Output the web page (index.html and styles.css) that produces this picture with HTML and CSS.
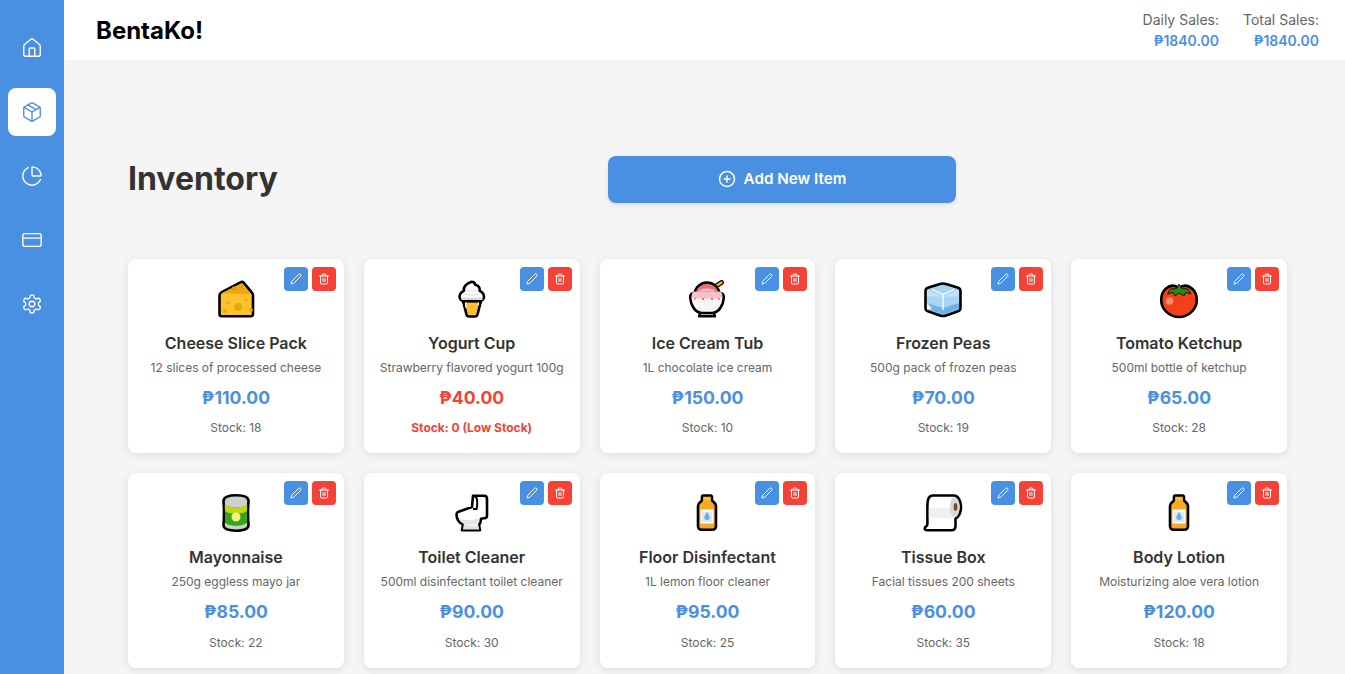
FILE: index.html
```html
<!DOCTYPE html>
<html lang="en">
<head>
<meta charset="utf-8">
<title>BentaKo! Inventory</title>
<link rel="stylesheet" href="styles.css">
</head>
<body>
<svg class="sprite" xmlns="http://www.w3.org/2000/svg">
  <symbol id="i-pen" viewBox="0 0 24 24"><path d="M21.174 6.812a1 1 0 0 0-3.986-3.987L3.842 16.174a2 2 0 0 0-.5.83l-1.321 4.352a.5.5 0 0 0 .623.622l4.353-1.32a2 2 0 0 0 .83-.497z"/></symbol>
  <symbol id="i-trash" viewBox="0 0 24 24"><path d="M3 6h18"/><path d="M19 6v14c0 1-1 2-2 2H7c-1 0-2-1-2-2V6"/><path d="M8 6V4c0-1 1-2 2-2h4c1 0 2 1 2 2v2"/><path d="M10 11v6"/><path d="M14 11v6"/></symbol>
  <symbol id="e-bottle" viewBox="0 0 40 40">
    <path d="M16.500 1.500h7a1.500 1.500 0 0 1 1.500 1.500v3c0 2 4 2 4 6v20c0 2.500-1.500 3.800-4 3.800H15c-2.500 0-4-1.300-4-3.800V12c0-4 4-4 4-6V3a1.500 1.500 0 0 1 1.500-1.500z" fill="#f9a825" stroke="#000" stroke-width="2.600" stroke-linejoin="round"/>
    <path d="M16.300 3h7.400v3.500h-7.400z" fill="#fbc02d"/>
    <path d="M13.500 15.500h13v14h-13z" fill="#fff"/>
    <path d="M15 17.500h10v10.500H15z" fill="#dbeafa"/>
    <path d="M20 18c-1.300 2.300-2.700 3.800-2.700 5.300a2.700 2.700 0 0 0 5.400 0c0-1.500-1.400-3-2.700-5.300z" fill="#6aaee6"/>
  </symbol>
</svg>
<div class="app">
  <nav class="sidebar">
    <a class="nav-item"><svg class="nav-icon" viewBox="0 0 24 24"><path d="M15 21v-8a1 1 0 0 0-1-1h-4a1 1 0 0 0-1 1v8"/><path d="M3 10a2 2 0 0 1 .709-1.528l7-5.999a2 2 0 0 1 2.582 0l7 5.999A2 2 0 0 1 21 10v9a2 2 0 0 1-2 2H5a2 2 0 0 1-2-2z"/></svg></a>
    <a class="nav-item active"><svg class="nav-icon" viewBox="0 0 24 24"><path d="m7.500 4.270 9 5.150"/><path d="M21 8a2 2 0 0 0-1-1.730l-7-4a2 2 0 0 0-2 0l-7 4A2 2 0 0 0 3 8v8a2 2 0 0 0 1 1.730l7 4a2 2 0 0 0 2 0l7-4A2 2 0 0 0 21 16Z"/><path d="m3.300 7 8.700 5 8.700-5"/><path d="M12 22V12"/></svg></a>
    <a class="nav-item"><svg class="nav-icon" viewBox="0 0 24 24"><path d="M21 12c.552 0 1.005-.449.95-.998a10 10 0 0 0-8.953-8.951c-.55-.055-.998.398-.998.95v8a1 1 0 0 0 1 1z"/><path d="M21.210 15.890A10 10 0 1 1 8 2.830"/></svg></a>
    <a class="nav-item"><svg class="nav-icon" viewBox="0 0 24 24"><rect x="2" y="5" width="20" height="14" rx="2"/><path d="M2 10h20"/></svg></a>
    <a class="nav-item"><svg class="nav-icon" viewBox="0 0 24 24"><path d="M12.220 2h-.44a2 2 0 0 0-2 2v.18a2 2 0 0 1-1 1.730l-.43.25a2 2 0 0 1-2 0l-.15-.08a2 2 0 0 0-2.730.73l-.22.38a2 2 0 0 0 .73 2.730l.15.1a2 2 0 0 1 1 1.720v.51a2 2 0 0 1-1 1.740l-.15.09a2 2 0 0 0-.73 2.730l.22.38a2 2 0 0 0 2.730.73l.15-.08a2 2 0 0 1 2 0l.43.25a2 2 0 0 1 1 1.730V20a2 2 0 0 0 2 2h.44a2 2 0 0 0 2-2v-.18a2 2 0 0 1 1-1.730l.43-.25a2 2 0 0 1 2 0l.15.08a2 2 0 0 0 2.730-.73l.22-.39a2 2 0 0 0-.73-2.730l-.15-.08a2 2 0 0 1-1-1.740v-.5a2 2 0 0 1 1-1.740l.15-.09a2 2 0 0 0 .73-2.730l-.22-.38a2 2 0 0 0-2.730-.73l-.15.08a2 2 0 0 1-2 0l-.43-.25a2 2 0 0 1-1-1.730V4a2 2 0 0 0-2-2z"/><circle cx="12" cy="12" r="3"/></svg></a>
  </nav>
  <div class="content">
    <header class="topbar">
      <div class="brand">BentaKo!</div>
      <div class="sales">
        <div class="sale"><div class="sale-label">Daily Sales:</div><div class="sale-value">₱1840.00</div></div>
        <div class="sale"><div class="sale-label">Total Sales:</div><div class="sale-value">₱1840.00</div></div>
      </div>
    </header>
    <main class="main">
      <div class="toolbar">
        <h1 class="page-title">Inventory</h1>
        <button class="add-btn"><svg class="add-icon" viewBox="0 0 24 24"><circle cx="12" cy="12" r="10"/><path d="M8 12h8"/><path d="M12 8v8"/></svg>Add New Item</button>
      </div>
      <div class="grid">

        <article class="card">
          <div class="actions"><button class="act edit"><svg class="act-icon"><use href="#i-pen"/></svg></button><button class="act del"><svg class="act-icon"><use href="#i-trash"/></svg></button></div>
          <svg class="emoji" viewBox="0 0 40 40">
            <path d="M3.500 15.500c0-1.500.5-2.200 1.800-3L24.500 2.300c1.200-.7 2.300-.5 3.100.4l8.300 10c.7.8 1.100 1.600 1.100 2.800V34c0 1.500-1 2.300-2.300 2.300H5.800c-1.300 0-2.300-.8-2.300-2.300z" fill="#fdc22d" stroke="#000" stroke-width="2.600" stroke-linejoin="round"/>
            <path d="M4.800 13.500 25 3.600 35.200 14z" fill="#eba80f"/>
            <circle cx="22" cy="27" r="4" fill="#eba80f"/><circle cx="30" cy="20" r="1.600" fill="#eba80f"/><circle cx="12" cy="23" r="1.500" fill="#eba80f"/><circle cx="9" cy="31" r="2" fill="#eba80f"/><circle cx="35" cy="30" r="1.900" fill="#eba80f"/><circle cx="18" cy="8.500" r="2.200" fill="#d99a0c"/><circle cx="26" cy="7" r="1.300" fill="#d99a0c"/>
          </svg>
          <h2 class="name">Cheese Slice Pack</h2>
          <p class="desc">12 slices of processed cheese</p>
          <div class="price">₱110.00</div>
          <div class="stock">Stock: 18</div>
        </article>

        <article class="card">
          <div class="actions"><button class="act edit"><svg class="act-icon"><use href="#i-pen"/></svg></button><button class="act del"><svg class="act-icon"><use href="#i-trash"/></svg></button></div>
          <svg class="emoji" viewBox="0 0 40 40">
            <path d="M11 21l3.500 13.500c.3 1.200 1 2 2.500 2h6c1.500 0 2.200-.8 2.500-2L29 21z" fill="#fcc02e" stroke="#000" stroke-width="2.600" stroke-linejoin="round"/>
            <path d="M19.500 1.800c2.500 0 3.500 1.500 3.700 3 3 .6 4.800 3 4.500 6 2.500 1.200 4.300 3.500 4.300 6 0 2.500-2.500 4.500-5 4.500H12.500c-2.500 0-5-2-5-4.500 0-2.500 1.800-4.800 4.300-6-.5-4 2.500-7 7.700-9z" fill="#fff" stroke="#000" stroke-width="2.600" stroke-linejoin="round"/>
            <path d="M9.500 17.500h21V20h-21z" fill="#d9d9d9"/>
            <path d="M14 9.500c3 2 9 2 12 0M12 14c4 1.500 12 1.500 16 0" fill="none" stroke="#e0e0e0" stroke-width="1.200"/>
            <path d="M13 22.500h1.500v5H13zM26 22.500h1v3h-1z" fill="#fff"/>
          </svg>
          <h2 class="name">Yogurt Cup</h2>
          <p class="desc">Strawberry flavored yogurt 100g</p>
          <div class="price low">₱40.00</div>
          <div class="stock low">Stock: 0 (Low Stock)</div>
        </article>

        <article class="card">
          <div class="actions"><button class="act edit"><svg class="act-icon"><use href="#i-pen"/></svg></button><button class="act del"><svg class="act-icon"><use href="#i-trash"/></svg></button></div>
          <svg class="emoji" viewBox="0 0 40 40">
            <path d="M26 8 34.500 2.500" stroke="#000" stroke-width="5" stroke-linecap="round"/>
            <path d="M26 8 34.500 2.500" stroke="#f4b41a" stroke-width="2.400" stroke-linecap="round"/>
            <path d="M13.500 32h13l1.500 4.300H12z" fill="#e0e0e0" stroke="#000" stroke-width="2.400" stroke-linejoin="round"/>
            <path d="M7.500 14C8 7 14 2.500 20 2.500S32 7 32.500 14z" fill="#e8707e" stroke="#000" stroke-width="2.600"/>
            <path d="M10 13c1-2.500 5-4.500 10-4.500s9 2 10 4.500z" fill="#f6bcbf"/>
            <path d="M7 13h26c3 0 4 2 3.800 5-.5 7-5 15-11.800 15H15C8.200 33 3.700 25 3.200 18 3 15 4 13 7 13z" fill="#f5f5f5" stroke="#000" stroke-width="2.600" stroke-linejoin="round"/>
            <path d="M7.500 11.500h25c1.500 0 2.700 1.500 2.700 3.500 0 2-1.200 3.500-3 3.500H7.800c-1.800 0-3-1.500-3-3.500s1.200-3.500 2.700-3.500z" fill="#f6c2c5"/>
            <path d="M7 18h2v1.500H7zM15 18h2v2h-2zM24 18h2v2h-2zM31 18h2v1.500h-2z" fill="#e8707e"/>
          </svg>
          <h2 class="name">Ice Cream Tub</h2>
          <p class="desc">1L chocolate ice cream</p>
          <div class="price">₱150.00</div>
          <div class="stock">Stock: 10</div>
        </article>

        <article class="card">
          <div class="actions"><button class="act edit"><svg class="act-icon"><use href="#i-pen"/></svg></button><button class="act del"><svg class="act-icon"><use href="#i-trash"/></svg></button></div>
          <svg class="emoji" viewBox="0 0 40 40">
            <path d="M17 4c2-.7 4-.7 6 0l11.500 3.500c1.800.6 3 1.800 3 3.500v17c0 1.700-1.200 3-3 3.500L23 35.500c-2 .7-4 .7-6 0L5.500 31.500c-1.800-.5-3-1.800-3-3.500V11c0-1.700 1.200-2.900 3-3.500z" fill="#a9d5f5" stroke="#000" stroke-width="2.600" stroke-linejoin="round"/>
            <path d="M20 17 36 9.500v7H4V9.500z" fill="#c3e2f8"/>
            <path d="M4 23 20 28l16-5v6l-16 5.500L4 29z" fill="#6db3e8"/>
            <path d="M4 22.500 9 29l-5 .5z" fill="#fff"/>
            <path d="M9 9.500 20 14.500 31 9.500M20 14.500V30" fill="none" stroke="#fff" stroke-width="1.300"/>
          </svg>
          <h2 class="name">Frozen Peas</h2>
          <p class="desc">500g pack of frozen peas</p>
          <div class="price">₱70.00</div>
          <div class="stock">Stock: 19</div>
        </article>

        <article class="card">
          <div class="actions"><button class="act edit"><svg class="act-icon"><use href="#i-pen"/></svg></button><button class="act del"><svg class="act-icon"><use href="#i-trash"/></svg></button></div>
          <svg class="emoji" viewBox="0 0 40 40">
            <path d="M20 8c4-3 9-3 13 .5 3.500 3 4.800 7 4.800 11.500 0 9-8 17-17.800 17S2.200 29 2.200 20c0-4.500 1.300-8.500 4.800-11.500 4-3.500 9-3.500 13-.5z" fill="#f4401a" stroke="#000" stroke-width="2.600" stroke-linejoin="round"/>
            <path d="M20 4l3 4.500 6 .5 3 5-5.500-1.500-1.500 3.500-5-3-4 3-2-3.500-5.500 1.500 3-5 6-.5z" fill="#2a8a10" stroke="#000" stroke-width=".8" stroke-linejoin="round"/>
            <circle cx="10.500" cy="21" r="3.800" fill="#f88a6f"/>
          </svg>
          <h2 class="name">Tomato Ketchup</h2>
          <p class="desc">500ml bottle of ketchup</p>
          <div class="price">₱65.00</div>
          <div class="stock">Stock: 28</div>
        </article>

        <article class="card">
          <div class="actions"><button class="act edit"><svg class="act-icon"><use href="#i-pen"/></svg></button><button class="act del"><svg class="act-icon"><use href="#i-trash"/></svg></button></div>
          <svg class="emoji" viewBox="0 0 40 40">
            <path d="M7.500 7C7.500 3 13 1.300 20 1.300S32.500 3 32.500 7c0 3-.5 3-.5 12s.5 9 .5 12c0 4-5.500 5.700-12.500 5.700S7.500 35 7.500 31c0-3 .5-3 .5-12s-.5-9-.5-12z" fill="#cfcfcf" stroke="#000" stroke-width="2.600" stroke-linejoin="round"/>
            <path d="M8.800 10.500c3 4 19.400 4 22.400 0l-.2 8.500v10c-4 4-18 4-22 0V19z" fill="#33a51a"/>
            <path d="M8.800 10.500c3 4 19.400 4 22.400 0L31 17c-4 3.500-18 3.500-22 0z" fill="#c3d80c"/>
            <path d="M9 29c4 4 18 4 22 0v2.500c-4 4-18 4-22 0z" fill="#cfcfcf"/>
            <circle cx="20" cy="23" r="4.500" fill="#f3f28a"/>
          </svg>
          <h2 class="name">Mayonnaise</h2>
          <p class="desc">250g eggless mayo jar</p>
          <div class="price">₱85.00</div>
          <div class="stock">Stock: 22</div>
        </article>

        <article class="card">
          <div class="actions"><button class="act edit"><svg class="act-icon"><use href="#i-pen"/></svg></button><button class="act del"><svg class="act-icon"><use href="#i-trash"/></svg></button></div>
          <svg class="emoji" viewBox="0 0 40 40">
            <path d="M21 1.800h11c2 0 3 1 3 3v17c0 1.500-1 2.500-3 2.500l-3 .5c0 3-1 5-2 6.500l1 4.900H10l1-6c-4-1.500-6.500-4.500-6.500-10 0-1 .7-2 2-2.500L20 13z" fill="#fff" stroke="#000" stroke-width="2.600" stroke-linejoin="round"/>
            <path d="M20.500 3c2-1 3.500-.5 4 1 1 2 1 8 0 11h-3.500" fill="none" stroke="#000" stroke-width="2"/>
            <path d="M11.800 30c5 2 11 2 14.500 1l1 4.400H11z" fill="#e3e3e3"/>
            <path d="M7 24c5 3 14 3 20 0-.5 3-1.500 5-2 6-5 1-10 .5-14-.5-2-1-3.500-3-4-5.500z" fill="#e3e3e3"/>
          </svg>
          <h2 class="name">Toilet Cleaner</h2>
          <p class="desc">500ml disinfectant toilet cleaner</p>
          <div class="price">₱90.00</div>
          <div class="stock">Stock: 30</div>
        </article>

        <article class="card">
          <div class="actions"><button class="act edit"><svg class="act-icon"><use href="#i-pen"/></svg></button><button class="act del"><svg class="act-icon"><use href="#i-trash"/></svg></button></div>
          <svg class="emoji" viewBox="0 0 40 40"><use href="#e-bottle"/></svg>
          <h2 class="name">Floor Disinfectant</h2>
          <p class="desc">1L lemon floor cleaner</p>
          <div class="price">₱95.00</div>
          <div class="stock">Stock: 25</div>
        </article>

        <article class="card">
          <div class="actions"><button class="act edit"><svg class="act-icon"><use href="#i-pen"/></svg></button><button class="act del"><svg class="act-icon"><use href="#i-trash"/></svg></button></div>
          <svg class="emoji" viewBox="0 0 40 40">
            <path d="M10 1.500h21c4 0 7 5 7 11.500s-3 11-5.500 11.500V32c0 2.500-1.500 4.300-4 4.300H4c-1.500 0-2.300-.7-2.300-2 0-1.200 1-1.800 1.800-2.300.6-.5.9-1.200.9-2.500V11C4.400 5 6 1.500 10 1.500z" fill="#fff" stroke="#000" stroke-width="2.600" stroke-linejoin="round"/>
            <path d="M5.800 14h24.200v10H5.800z" fill="#f0f0f0"/>
            <path d="M31 3c3 .5 5.500 4.500 5.500 10s-2.500 10-5.500 10c-2.500-.5-4-5-4-10s1.500-9.500 4-10z" fill="#d8d8d8"/>
            <ellipse cx="32.500" cy="13" rx="1.900" ry="4" fill="#7a4a2a"/>
          </svg>
          <h2 class="name">Tissue Box</h2>
          <p class="desc">Facial tissues 200 sheets</p>
          <div class="price">₱60.00</div>
          <div class="stock">Stock: 35</div>
        </article>

        <article class="card">
          <div class="actions"><button class="act edit"><svg class="act-icon"><use href="#i-pen"/></svg></button><button class="act del"><svg class="act-icon"><use href="#i-trash"/></svg></button></div>
          <svg class="emoji" viewBox="0 0 40 40"><use href="#e-bottle"/></svg>
          <h2 class="name">Body Lotion</h2>
          <p class="desc">Moisturizing aloe vera lotion</p>
          <div class="price">₱120.00</div>
          <div class="stock">Stock: 18</div>
        </article>

      </div>
    </main>
  </div>
</div>
</body>
</html>
```

FILE: styles.css
```css
* { box-sizing: border-box; }
html, body { margin: 0; height: 100%; overflow: hidden; }
body { font-family: Inter, "Liberation Sans", sans-serif; background: #f5f5f5; color: #333; }
.sprite { display: none; }
.app { display: flex; height: 100vh; }

.sidebar { flex: 0 0 64px; background: #4a90e2; display: flex; flex-direction: column; align-items: center; gap: 16px; padding-top: 24px; }
.nav-item { width: 48px; height: 48px; border-radius: 8px; display: flex; align-items: center; justify-content: center; color: #fff; }
.nav-item.active { background: #fff; color: #4a90e2; }
.nav-icon { width: 22px; height: 22px; fill: none; stroke: currentColor; stroke-width: 1.500; stroke-linecap: round; stroke-linejoin: round; }

.content { flex: 1; min-width: 0; display: flex; flex-direction: column; }
.topbar { flex: 0 0 60px; background: #fff; display: flex; align-items: center; justify-content: space-between; padding: 0 26px 0 32px; }
.brand { font-size: 24px; font-weight: 700; color: #000; }
.sales { display: flex; gap: 24px; padding-top: 1px; }
.sale { text-align: right; font-size: 14px; line-height: 20px; }
.sale-label { color: #666; }
.sale-value { margin-top: 1px; color: #4a90e2; font-weight: 600; }

.main { flex: 1; min-height: 0; padding: 96px 58px 0 64px; }
.toolbar { display: flex; align-items: center; margin-bottom: 56.100px; }
.page-title { flex: 0 0 480px; margin: 0 0 2px; font-size: 32px; font-weight: 700; color: #333; }
.add-btn { width: 348px; height: 47px; padding: 0 0 2px; border: 0; border-radius: 8px; background: #4a90e2; color: #fff; font: 600 15.200px Inter, sans-serif; display: flex; align-items: center; justify-content: center; gap: 8px; box-shadow: 0 2px 4px rgba(0,0,0,.1); }
.add-icon { width: 18px; height: 18px; fill: none; stroke: currentColor; stroke-width: 2; stroke-linecap: round; stroke-linejoin: round; }

.grid { display: grid; grid-template-columns: repeat(5, 1fr); gap: 20px; }
.card { position: relative; background: #fff; border-radius: 8px; padding: 20px 16px 15.800px; text-align: center; box-shadow: 0 2px 8px rgba(0,0,0,.1); }
.actions { position: absolute; top: 8px; right: 8px; display: flex; gap: 4px; }
.act { width: 24px; height: 24px; padding: 0; border: 0; border-radius: 4px; color: #fff; display: flex; align-items: center; justify-content: center; }
.edit { background: #4a90e2; }
.del { background: #f44336; }
.act-icon { width: 12px; height: 12px; fill: none; stroke: currentColor; stroke-width: 2; stroke-linecap: round; stroke-linejoin: round; }

.emoji { display: block; width: 40px; height: 40px; margin: 0.600px auto 11.100px; }
.name { margin: 0 0 1.300px; font-size: 16px; line-height: 25.600px; font-weight: 600; color: #333; }
.desc { margin: 0 0 4.700px; font-size: 12px; line-height: 19.200px; color: #666; }
.price { margin-bottom: 4.800px; font-size: 17.600px; line-height: 32px; font-weight: 700; color: #4a90e2; }
.stock { font-size: 12px; line-height: 19.200px; color: #666; }
.price.low, .stock.low { color: #f44336; }
.stock.low { font-weight: 700; }
```
